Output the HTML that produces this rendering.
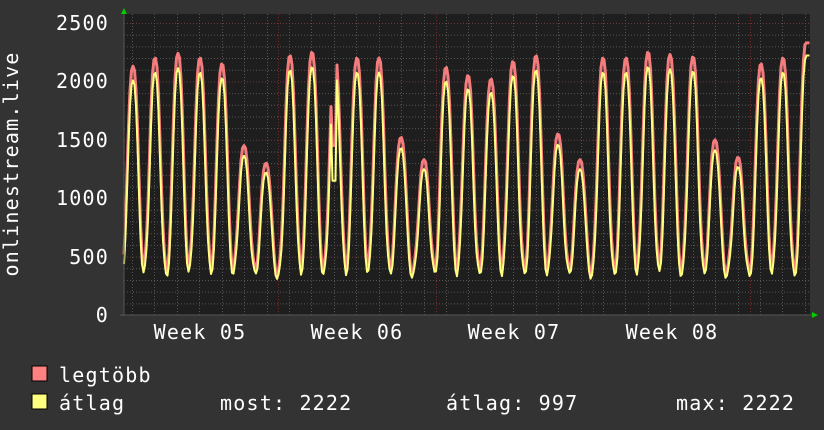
<!DOCTYPE html>
<html><head><meta charset="utf-8"><style>
html,body{margin:0;padding:0;background:#333333;width:824px;height:430px;overflow:hidden}
svg{display:block}
text{font-family:"DejaVu Sans Mono","Liberation Mono",monospace;fill:#ffffff;letter-spacing:1.2px}
</style></head><body>
<svg id="g" width="824" height="430" viewBox="0 0 824 430" xmlns="http://www.w3.org/2000/svg">
<rect x="0" y="0" width="824" height="430" fill="#333333"/>
<rect x="124" y="14" width="686" height="301" fill="#1e1e1e"/>
<g id="grid"></g>
<polyline id="mx" fill="none" stroke="#f47c7c" stroke-width="3" stroke-linejoin="round"/>
<polyline id="av" fill="none" stroke="#ffff80" stroke-width="2" stroke-linejoin="round"/>
<line x1="124" y1="14" x2="124" y2="316" stroke="#555" stroke-width="1"/>
<line x1="120" y1="315" x2="812" y2="315" stroke="#555" stroke-width="1"/>
<polygon points="121,14 127,14 124,8" fill="#00cc00"/>
<polygon points="812,312 812,318 818,315" fill="#00cc00"/>
<g font-size="20" text-anchor="end">
<text x="109" y="30">2500</text>
<text x="109" y="88">2000</text>
<text x="109" y="147">1500</text>
<text x="109" y="205">1000</text>
<text x="109" y="264">500</text>
<text x="109" y="322">0</text>
</g>
<text font-size="20" transform="translate(18,164) rotate(-90)" text-anchor="middle">onlinestream.live</text>
<g font-size="20" text-anchor="middle">
<text x="200" y="339">Week 05</text>
<text x="357" y="339">Week 06</text>
<text x="514" y="339">Week 07</text>
<text x="672" y="339">Week 08</text>
</g>
<rect x="32" y="366" width="15" height="15" fill="#ff8080" stroke="#000" stroke-width="1"/>
<rect x="32" y="394" width="15" height="15" fill="#ffff80" stroke="#000" stroke-width="1"/>
<g font-size="20">
<text x="59" y="382">legtöbb</text>
<text x="59" y="410">átlag</text>
<text x="220" y="410">most: 2222</text>
<text x="446" y="410">átlag: 997</text>
<text x="676" y="410">max: 2222</text>
</g>
</svg>
<script>
(function(){
var NS="http://www.w3.org/2000/svg",g=document.getElementById('grid');
function ln(x1,y1,x2,y2,c){var l=document.createElementNS(NS,'line');l.setAttribute('x1',x1);l.setAttribute('y1',y1);l.setAttribute('x2',x2);l.setAttribute('y2',y2);l.setAttribute('stroke',c);l.setAttribute('stroke-width',1);l.setAttribute('stroke-dasharray','1,2');g.appendChild(l);}
function Y(v){return 315-v*0.1168;}
for(var v=100;v<=2500;v+=100){ln(124,Y(v)+.5,810,Y(v)+.5,v%500==0?'#6a3a3a':'#555');}
for(var x=132;x<810;x+=22.43){ln(Math.round(x)+.5,14,Math.round(x)+.5,315,'#555');}
[278,436,593,750].forEach(function(x){ln(x+.5,14,x+.5,315,'#7a2a2a');});
var peaks=[[133,2130],[155,2200],[178,2240],[200,2200],[222,2150],[244,1450],[266,1300],[290,2220],[312,2250],[335,2220],[357,2200],[379,2200],[401,1520],[424,1330],[446,2120],[468,2050],[491,2020],[513,2170],[536,2220],[558,1550],[580,1330],[603,2200],[626,2200],[648,2250],[670,2230],[693,2210],[715,1500],[738,1350],[761,2150],[783,2200],[806,2330]];
var mx=[],av=[];
for(var x=124;x<=810;x+=1.5){
 var best=null,d=1e9;peaks.forEach(function(p){var dd=Math.abs(x-p[0]);if(dd<d){d=dd;best=p;}});
 var t=(x-best[0])/11.2;
 var s=Math.exp(-Math.pow(Math.abs(t)/0.6,2.6));
 var lo=340+40*Math.sin(x*0.7);
 var m=lo+(best[1]-lo)*s;
 var a=lo-15+(best[1]*0.95-lo)*Math.pow(s,1.15);
 if(x>331&&x<336){m=1450;a=1150;}
 if(x>806){m=2330;a=2222;}
 mx.push(x.toFixed(1)+','+Y(m).toFixed(1));av.push(x.toFixed(1)+','+Y(a).toFixed(1));
}
document.getElementById('mx').setAttribute('points',mx.join(' '));
document.getElementById('av').setAttribute('points',av.join(' '));
})();
</script>
</body></html>
